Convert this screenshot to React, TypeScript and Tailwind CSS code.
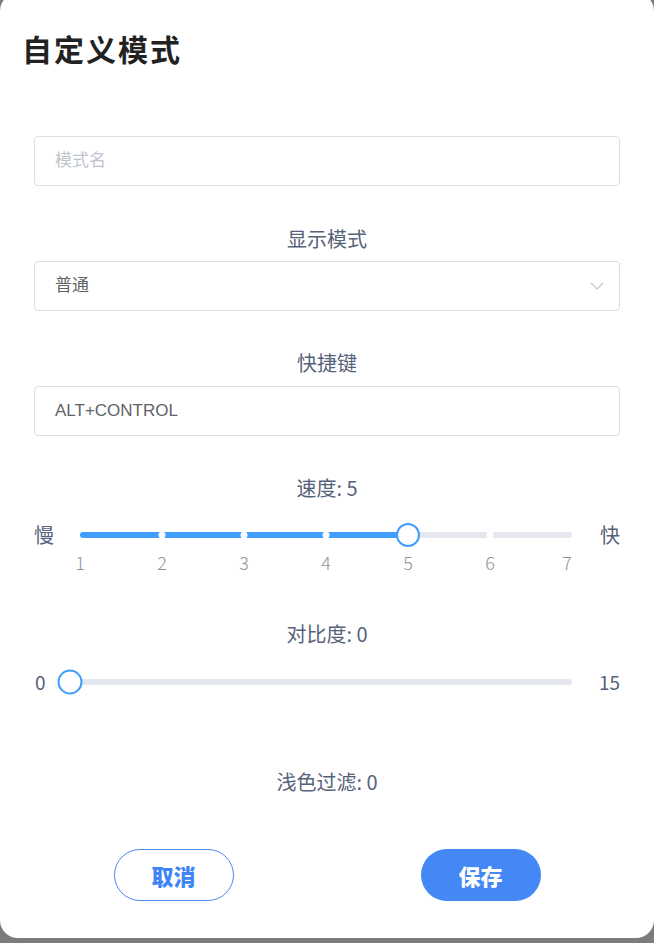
const FONT = "font-['Liberation_Sans','Noto_Sans_CJK_SC',sans-serif]";
const CJK = "font-['Noto_Sans_CJK_SC',sans-serif]";

const SPEED_STOPS = ["left-[16.667%]", "left-[33.333%]", "left-[50%]", "left-[83.333%]"];

const SPEED_MARKS = [
  { label: "1", pos: "left-[0%]" },
  { label: "2", pos: "left-[16.667%]" },
  { label: "3", pos: "left-[33.333%]" },
  { label: "4", pos: "left-[50%]" },
  { label: "5", pos: "left-[66.667%]" },
  { label: "6", pos: "left-[83.333%]" },
  { label: "7", pos: "left-[calc(100%-5px)]" },
];

function Label({ children, className = "" }: { children: React.ReactNode; className?: string }) {
  return (
    <div className={`h-[24px] leading-[24px] text-center text-[20px] text-[#56627a] ${CJK} ${className}`}>
      {children}
    </div>
  );
}

function Field({ children, className = "" }: { children: React.ReactNode; className?: string }) {
  return (
    <div
      className={`h-[50px] flex items-center justify-between pl-[20px] pr-[14px] border border-[#dcdfe6] rounded-[4px] bg-white text-[17px] ${className}`}
    >
      {children}
    </div>
  );
}

export default function App() {
  return (
    <div className={`min-h-[943px] bg-[#7c7c7c] overflow-hidden ${FONT}`}>
      <div className="mt-[-7px] h-[945px] bg-white rounded-[18px] pt-[35px]">
        {/* Title */}
        <h1 className={`pl-[22px] h-[40px] leading-[40px] text-[30px] font-bold text-[#222] tracking-[2px] ${CJK}`}>
          自定义模式
        </h1>

        <div className="px-[34px]">
          {/* Mode name */}
          <Field className="mt-[68px]">
            <span className="text-[#c0c4cc]">模式名</span>
          </Field>

          {/* Display mode */}
          <Label className="mt-[41px]">显示模式</Label>
          <Field className="mt-[10px]">
            <span className="text-[#5f6368]">普通</span>
            <svg width="14" height="8" viewBox="0 0 14 8" className="mr-[1px]">
              <polyline points="1,1 7,7 13,1" fill="none" stroke="#c0c4cc" strokeWidth="1.2" />
            </svg>
          </Field>

          {/* Shortcut */}
          <Label className="mt-[40px]">快捷键</Label>
          <Field className="mt-[11px]">
            <span className="text-[#5f6368]">ALT+CONTROL</span>
          </Field>

          {/* Speed */}
          <Label className="mt-[40px]">速度: 5</Label>
          <div className={`mt-[23px] h-[24px] flex items-center ${CJK}`}>
            <span className="w-[20px] text-[20px] leading-[24px] text-[#56627a]">慢</span>
            <div className="ml-[26px] relative w-[492px] h-[6px] bg-[#e4e7ed] rounded-[3px]">
              <div className="absolute left-0 top-0 h-full w-[66.667%] bg-[#409eff] rounded-l-[3px]" />
              {SPEED_STOPS.map((s) => (
                <div
                  key={s}
                  className={`absolute ${s} top-[50%] w-[7px] h-[7px] -translate-x-1/2 -translate-y-1/2 rounded-full bg-white`}
                />
              ))}
              <div className="absolute left-[66.667%] top-[50%] w-[24px] h-[24px] -translate-x-1/2 -translate-y-1/2 rounded-full bg-white border-2 border-[#409eff]" />
            </div>
            <span className="ml-[28px] w-[20px] text-[20px] leading-[24px] text-[#56627a]">快</span>
          </div>
          <div className={`mt-[5px] ml-[46px] relative w-[492px] h-[20px] ${CJK}`}>
            {SPEED_MARKS.map((m) => (
              <span
                key={m.label}
                className={`absolute ${m.pos} top-0 -translate-x-1/2 leading-[20px] text-[18px] font-light text-[#909399]`}
              >
                {m.label}
              </span>
            ))}
          </div>

          {/* Contrast */}
          <Label className="mt-[50px]">对比度: 0</Label>
          <div className={`mt-[24px] h-[24px] flex items-center ${CJK}`}>
            <span className="w-[12px] ml-[1px] text-[19px] leading-[24px] text-[#56627a]">0</span>
            <div className="ml-[23px] relative w-[505px] h-[6px] bg-[#e4e7ed] rounded-[3px]">
              <div className="absolute left-0 top-[50%] w-[25px] h-[25px] -translate-x-1/2 -translate-y-1/2 rounded-full bg-white border-2 border-[#409eff]" />
            </div>
            <span className="ml-[27px] text-[19px] leading-[24px] text-[#56627a]">15</span>
          </div>

          {/* Light filter */}
          <Label className="mt-[76px]">浅色过滤: 0</Label>

          {/* Buttons */}
          <div className={`mt-[55px] flex justify-center gap-[187px] ${CJK}`}>
            <button className="w-[120px] h-[52px] rounded-full border border-[#4a8af4] bg-white text-[#3f84f5] text-[22px] font-black">
              取消
            </button>
            <button className="w-[120px] h-[52px] rounded-full bg-[#4388f5] text-white text-[22px] font-black">
              保存
            </button>
          </div>
        </div>
      </div>
    </div>
  );
}
